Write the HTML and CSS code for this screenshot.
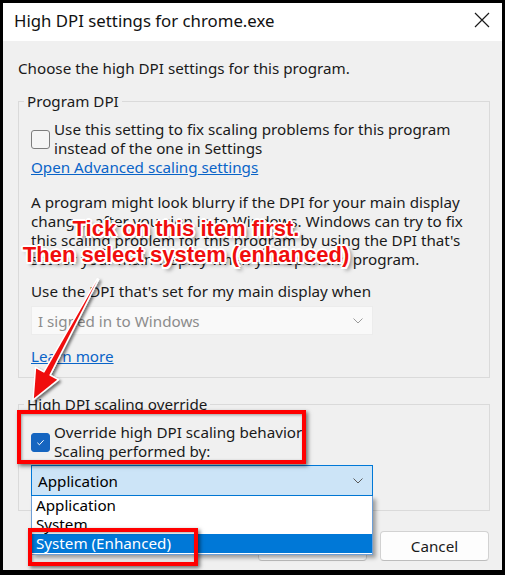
FILE: index.html
```html
<!DOCTYPE html>
<html>
<head>
<meta charset="utf-8">
<link rel="stylesheet" href="styles.css">
</head>
<body>
<div class="frame">
  <div class="window">
    <div class="titlebar">
      <span class="title">High DPI settings for chrome.exe</span>
      <svg class="close" viewBox="0 0 16 16"><path d="M1 1 L15 15 M15 1 L1 15" stroke="#1a1a1a" stroke-width="1.2" fill="none"/></svg>
    </div>
    <div class="content">
      <p class="intro">Choose the high DPI settings for this program.</p>
      <fieldset class="group group-program">
        <legend>Program DPI</legend>
        <div class="check-row">
          <span class="box"></span>
          <span class="check-text">Use this setting to fix scaling problems for this program<br>instead of the one in Settings</span>
        </div>
        <a class="link">Open Advanced scaling settings</a>
        <p class="para">A program might look blurry if the DPI for your main display<br>changes after you sign in to Windows. Windows can try to fix<br>this scaling problem for this program by using the DPI that's<br>set for your main display when you open the program.</p>
        <p class="label">Use the DPI that's set for my main display when</p>
        <div class="select disabled">
          <span>I signed in to Windows</span>
          <svg class="chev" viewBox="0 0 10 6"><path d="M0.5 0.5 L5 5 L9.5 0.5" stroke="#9a9a9a" stroke-width="1" fill="none"/></svg>
        </div>
        <a class="link learn">Learn more</a>
      </fieldset>
      <fieldset class="group group-override">
        <legend>High DPI scaling override</legend>
        <div class="check-row">
          <span class="box checked"><svg viewBox="0 0 19 19"><path d="M6 9.8 L8.3 12 L13 7" stroke="#fff" stroke-width="1.1" fill="none"/></svg></span>
          <span class="check-text">Override high DPI scaling behavior<br>Scaling performed by:</span>
        </div>
        <div class="select-wrap">
          <div class="select open">
            <span>Application</span>
            <svg class="chev" viewBox="0 0 10 6"><path d="M0.5 0.5 L5 5 L9.5 0.5" stroke="#5a5a5a" stroke-width="1" fill="none"/></svg>
          </div>
          <ul class="list">
            <li>Application</li>
            <li>System</li>
            <li class="selected">System (Enhanced)</li>
          </ul>
        </div>
      </fieldset>
      <div class="buttons">
        <button class="btn">OK</button>
        <button class="btn">Cancel</button>
      </div>
    </div>
  </div>

  <div class="callout">Tick on this item first.<br>Then select system (enhanced)</div>
  <svg class="arrow" viewBox="0 0 505 575">
    <defs>
      <filter id="sh" x="-20%" y="-20%" width="150%" height="150%">
        <feDropShadow dx="2" dy="2" stdDeviation="1.5" flood-color="#000" flood-opacity="0.55"/>
      </filter>
    </defs>
    <polygon filter="url(#sh)" points="98.6,279.3 50.1,375.1 58.5,379.6 33,400 35.5,367.4 43.9,371.9 97.4,278.7" fill="#f01010" stroke="#fff" stroke-width="1.5" stroke-linejoin="round"/>
  </svg>
  <div class="mark mark-1"></div>
  <div class="mark mark-2"></div>
</div>
</body>
</html>
```

FILE: styles.css
```css
html, body {
  margin: 0;
  padding: 0;
  background: #000;
}

.frame {
  position: relative;
  width: 505px;
  height: 575px;
  box-sizing: border-box;
  padding: 3px 3px 5px 3px;
  background: #000;
  overflow: hidden;
}

.window {
  height: 100%;
  background: #f0f0f0;
  display: flex;
  flex-direction: column;
  font-family: "Noto Sans", "Open Sans", sans-serif;
  font-size: 15.2px;
  color: #1a1a1a;
}

.titlebar {
  flex: none;
  height: 38px;
  box-sizing: border-box;
  background: #fff;
  display: flex;
  align-items: center;
  justify-content: space-between;
  padding: 0 12px 4px 11px;
}

.title {
  font-size: 16.8px;
  color: #111;
}

.close {
  width: 16px;
  height: 16px;
}

.content {
  padding: 0 12px 0 15px;
}

.intro {
  margin: 18px 0 0;
  line-height: 19px;
}

.group {
  margin: 14px 0 0;
  padding: 0 12px 11px;
  border: 1px solid #dadada;
  min-width: 0;
}

.group legend {
  padding: 0 3px;
  margin-left: -7px;
  line-height: 19px;
}

.group-override {
  margin-top: 17px;
  padding-bottom: 14px;
}

.check-row {
  display: flex;
  align-items: center;
  gap: 4px;
  margin-top: 9px;
  line-height: 19px;
  white-space: nowrap;
}

.box {
  flex: none;
  width: 19px;
  height: 19px;
  box-sizing: border-box;
  border: 1px solid #7d7d7d;
  border-radius: 3px;
  background: #f5f5f5;
}

.box.checked {
  background: #1565c0;
  border-color: #1565c0;
}

.box.checked svg {
  display: block;
  width: 17px;
  height: 17px;
}

.link {
  display: block;
  width: max-content;
  color: #0a64c8;
  text-decoration: underline;
  line-height: 19px;
}

.para {
  margin: 16px 0 0;
  line-height: 19px;
  white-space: nowrap;
}

.label {
  margin: 13px 0 0;
  line-height: 19px;
}

.select {
  width: 342px;
  box-sizing: border-box;
  display: flex;
  align-items: center;
  justify-content: space-between;
  padding: 0 9px 0 6px;
}

.select.disabled {
  margin-top: 5px;
  height: 29px;
  background: #f9f9f9;
  border: 1px solid #ececec;
  color: #8c8c8c;
}

.chev {
  width: 10px;
  height: 6px;
}

.learn {
  margin-top: 12px;
}

.select-wrap {
  position: relative;
  margin-top: 4px;
  width: 342px;
}

.select.open {
  height: 31px;
  background: #cce4f7;
  border: 1px solid #0078d7;
  color: #000;
}

.list {
  position: absolute;
  left: 0;
  top: 100%;
  width: 342px;
  box-sizing: border-box;
  margin: 0;
  padding: 0 0 1px;
  list-style: none;
  background: #fff;
  border: 1px solid #6e9fd6;
  border-top: none;
  box-shadow: 3px 3px 4px rgba(0, 0, 0, 0.35);
  color: #000;
  z-index: 2;
}

.list li {
  height: 19px;
  line-height: 19px;
  padding-left: 4px;
}

.list li.selected {
  background: #0078d7;
  color: #fff;
}

.buttons {
  display: flex;
  justify-content: flex-end;
  gap: 13px;
  margin-top: 20px;
  padding-right: 1px;
}

.btn {
  width: 109px;
  height: 30px;
  box-sizing: border-box;
  background: #fdfdfd;
  border: 1px solid #d2d2d2;
  border-bottom-color: #bdbdbd;
  border-radius: 4px;
  font: inherit;
  color: #1a1a1a;
}

.callout {
  position: absolute;
  left: 0;
  top: 216px;
  width: 372px;
  text-align: center;
  font-family: "Liberation Sans", Arial, sans-serif;
  font-weight: bold;
  font-size: 22px;
  line-height: 26px;
  color: #f00d0d;
  white-space: nowrap;
  text-shadow:
    -2px 0 0 #fff, 2px 0 0 #fff, 0 -2px 0 #fff, 0 2px 0 #fff,
    -1.5px -1.5px 0 #fff, 1.5px -1.5px 0 #fff, -1.5px 1.5px 0 #fff, 1.5px 1.5px 0 #fff,
    3px 3px 4px rgba(0, 0, 0, 0.6);
  z-index: 5;
}

.arrow {
  position: absolute;
  left: 0;
  top: 0;
  width: 505px;
  height: 575px;
  pointer-events: none;
  z-index: 5;
}

.mark {
  position: absolute;
  box-sizing: border-box;
  border: 4px solid #ff0000;
  box-shadow: 2px 2px 4px rgba(0, 0, 0, 0.55), inset 1px 1px 3px rgba(0, 0, 0, 0.35);
  z-index: 6;
}

.mark-1 {
  left: 17px;
  top: 410px;
  width: 289px;
  height: 54px;
}

.mark-2 {
  left: 28px;
  top: 528px;
  width: 170px;
  height: 38px;
}
```
